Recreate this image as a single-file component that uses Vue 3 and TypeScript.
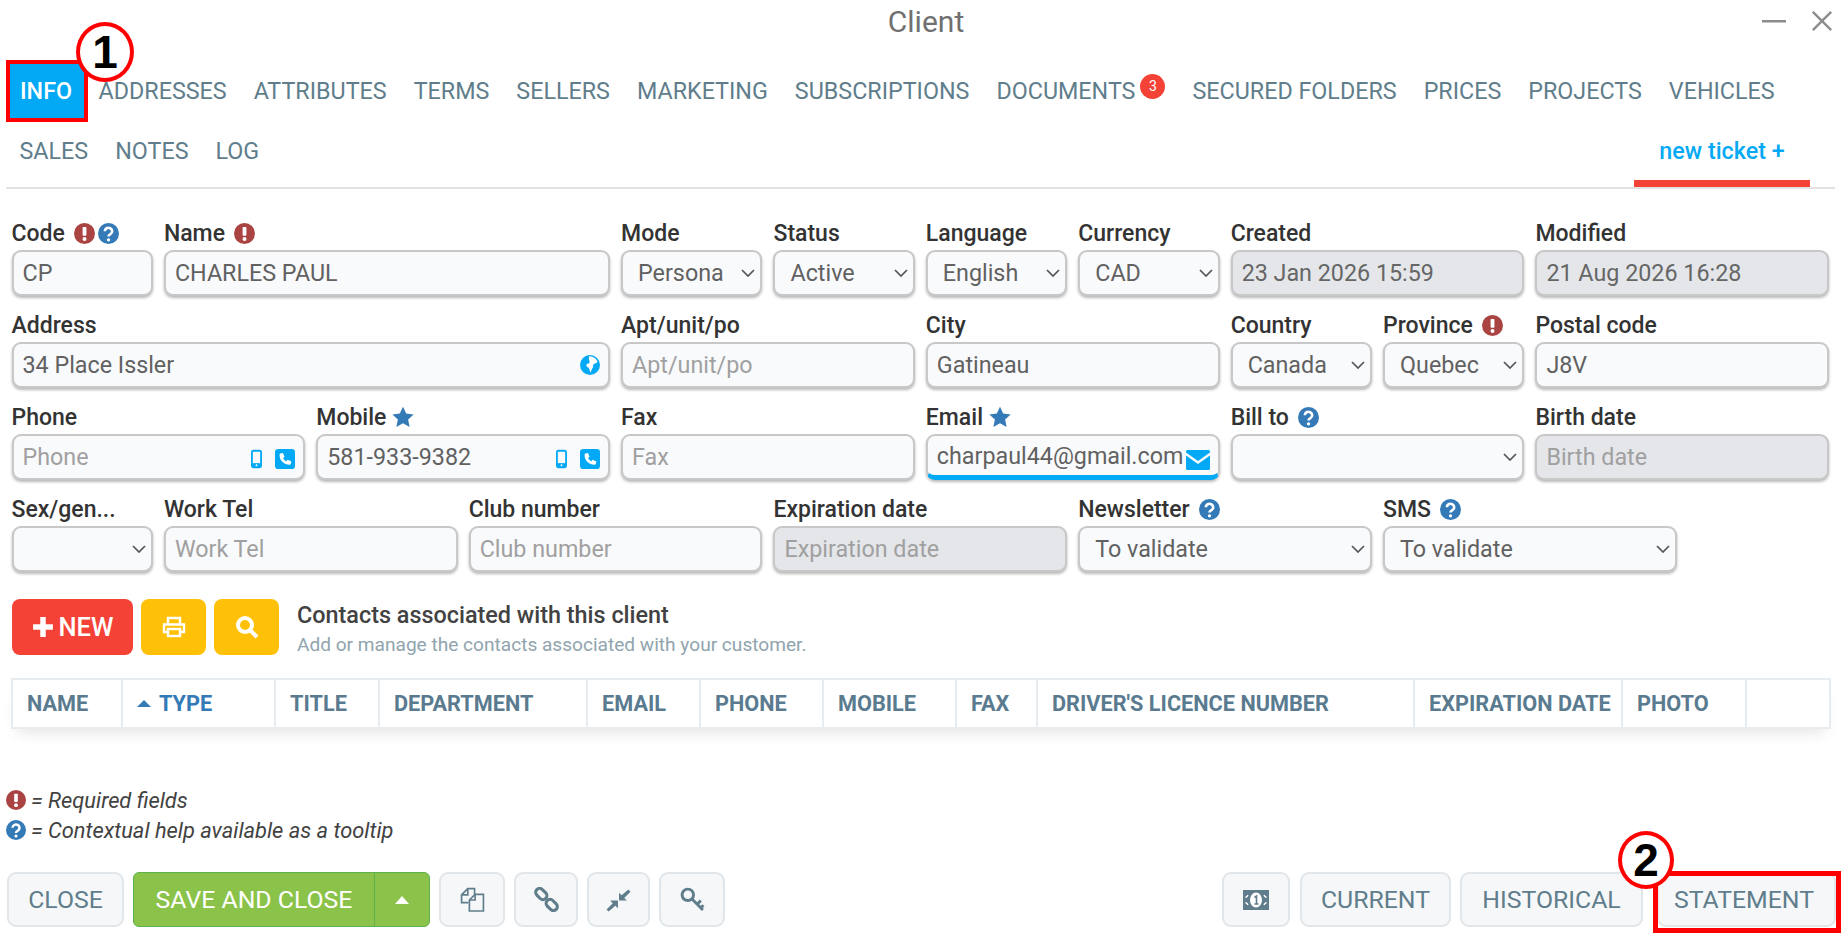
<script setup lang="ts">
interface Field {
  label: string
  span: number
  kind: 'input' | 'select'
  value?: string
  placeholder?: string
  disabled?: boolean
  focus?: boolean
  marks?: string[]
  icons?: string[]
}

const topTabs = ['ADDRESSES', 'ATTRIBUTES', 'TERMS', 'SELLERS', 'MARKETING', 'SUBSCRIPTIONS']
const midTabs = ['SECURED FOLDERS', 'PRICES', 'PROJECTS', 'VEHICLES']
const lowTabs = ['SALES', 'NOTES', 'LOG']

const fields: Field[] = [
  { label: 'Code', span: 1, kind: 'input', value: 'CP', marks: ['req', 'help'] },
  { label: 'Name', span: 3, kind: 'input', value: 'CHARLES PAUL', marks: ['req'] },
  { label: 'Mode', span: 1, kind: 'select', value: 'Persona' },
  { label: 'Status', span: 1, kind: 'select', value: 'Active' },
  { label: 'Language', span: 1, kind: 'select', value: 'English' },
  { label: 'Currency', span: 1, kind: 'select', value: 'CAD' },
  { label: 'Created', span: 2, kind: 'input', value: '23 Jan 2026 15:59', disabled: true },
  { label: 'Modified', span: 2, kind: 'input', value: '21 Aug 2026 16:28', disabled: true },
  { label: 'Address', span: 4, kind: 'input', value: '34 Place Issler', icons: ['globe'] },
  { label: 'Apt/unit/po', span: 2, kind: 'input', placeholder: 'Apt/unit/po' },
  { label: 'City', span: 2, kind: 'input', value: 'Gatineau' },
  { label: 'Country', span: 1, kind: 'select', value: 'Canada' },
  { label: 'Province', span: 1, kind: 'select', value: 'Quebec', marks: ['req'] },
  { label: 'Postal code', span: 2, kind: 'input', value: 'J8V' },
  { label: 'Phone', span: 2, kind: 'input', placeholder: 'Phone', icons: ['mobile', 'call'] },
  { label: 'Mobile', span: 2, kind: 'input', value: '581-933-9382', marks: ['star'], icons: ['mobile', 'call'] },
  { label: 'Fax', span: 2, kind: 'input', placeholder: 'Fax' },
  { label: 'Email', span: 2, kind: 'input', value: 'charpaul44@gmail.com', marks: ['star'], icons: ['mail'], focus: true },
  { label: 'Bill to', span: 2, kind: 'select', value: '', marks: ['help'] },
  { label: 'Birth date', span: 2, kind: 'input', placeholder: 'Birth date', disabled: true },
  { label: 'Sex/gen...', span: 1, kind: 'select', value: '' },
  { label: 'Work Tel', span: 2, kind: 'input', placeholder: 'Work Tel' },
  { label: 'Club number', span: 2, kind: 'input', placeholder: 'Club number' },
  { label: 'Expiration date', span: 2, kind: 'input', placeholder: 'Expiration date', disabled: true },
  { label: 'Newsletter', span: 2, kind: 'select', value: 'To validate', marks: ['help'] },
  { label: 'SMS', span: 2, kind: 'select', value: 'To validate', marks: ['help'] },
]

const columns = [
  { name: 'NAME', w: 110 },
  { name: 'TYPE', w: 153, sorted: true },
  { name: 'TITLE', w: 104 },
  { name: 'DEPARTMENT', w: 208 },
  { name: 'EMAIL', w: 113 },
  { name: 'PHONE', w: 123 },
  { name: 'MOBILE', w: 133 },
  { name: 'FAX', w: 81 },
  { name: "DRIVER'S LICENCE NUMBER", w: 377 },
  { name: 'EXPIRATION DATE', w: 208 },
  { name: 'PHOTO', w: 124 },
  { name: '', w: 84 },
]

const toolIcons = ['copy', 'chain', 'compress', 'key']
</script>

<template>
  <div class="page">
    <svg class="sprite" aria-hidden="true">
      <symbol id="req" viewBox="0 0 24 24">
        <circle cx="12" cy="12" r="12" fill="#a94442" />
        <rect x="9.8" y="4.5" width="4.4" height="10" rx="1" fill="#fff" />
        <circle cx="12" cy="18.2" r="2.3" fill="#fff" />
      </symbol>
      <symbol id="help" viewBox="0 0 24 24">
        <circle cx="12" cy="12" r="12" fill="#337ab7" />
        <path d="M7.8 9.4a4.2 3.9 0 1 1 6.4 3.3c-1.4.9-2.2 1.3-2.2 2.8" fill="none" stroke="#fff" stroke-width="3" />
        <circle cx="12" cy="19.2" r="1.9" fill="#fff" />
      </symbol>
      <symbol id="star" viewBox="0 0 24 24">
        <polygon points="12,0.8 15.5,8.2 23.6,9.2 17.6,14.8 19.2,22.9 12,18.9 4.8,22.9 6.4,14.8 0.4,9.2 8.5,8.2" fill="#337ab7" />
      </symbol>
      <symbol id="globe" viewBox="0 0 24 24">
        <circle cx="12" cy="12" r="12" fill="#03a9f4" />
        <path d="M11 1.500c4 0 9 2.500 10 7-1 1.500-3.500 1.500-5 3-1 1.500.5 3-1.500 5-1 1-.5 3-2 4.500-1-2.500-1-4.500-2.500-6-2-.5-3-2.500-2-4 1.500-1 3.500-.5 3.500-3 0-2-1.500-3-.5-6.500z" fill="#fff" />
      </symbol>
      <symbol id="mobile" viewBox="0 0 12 20">
        <rect x="1" y="1" width="10" height="18" rx="1.600" fill="none" stroke="#03a9f4" stroke-width="2" />
        <rect x="1" y="14.500" width="10" height="4.500" fill="#03a9f4" />
        <circle cx="6" cy="16.800" r="1" fill="#fff" />
      </symbol>
      <symbol id="call" viewBox="0 0 24 24">
        <rect width="24" height="24" rx="4" fill="#03a9f4" />
        <path d="M6.500 5.500l3-.8 2 4.500-1.800 1.500c.8 1.800 2.200 3.200 4 4l1.500-1.800 4.500 2-.8 3c-.2.600-.7 1-1.300 1C10.500 18.800 5.200 13.500 5.500 6.800c0-.6.400-1.100 1-1.300z" fill="#fff" />
      </symbol>
      <symbol id="mail" viewBox="0 0 24 20">
        <path d="M0 2.500V1.500C0 .7.700 0 1.500 0h21c.8 0 1.500.7 1.500 1.500v1L12 11z" fill="#03a9f4" />
        <path d="M0 5.500V18.500c0 .8.700 1.500 1.500 1.500h21c.8 0 1.500-.7 1.500-1.500V5.500L12 14z" fill="#03a9f4" />
      </symbol>
      <symbol id="chev" viewBox="0 0 14 8">
        <path d="M1 1l6 6 6-6" fill="none" stroke="#555" stroke-width="1.700" />
      </symbol>
      <symbol id="copy" viewBox="0 0 24 24" fill="none" stroke="#607d8b" stroke-width="1.600">
        <path d="M8 15H1.500V7.500L7.500 1.500H14V7" />
        <path d="M7.500 1.500v6h-6" />
        <path d="M9 23V12.500L14.500 7H22.500V23z" />
        <path d="M14.500 7v5.500H9" />
      </symbol>
      <symbol id="chain" viewBox="0 0 24 24" fill="none" stroke="#607d8b" stroke-width="3">
        <rect x="1" y="3" width="12" height="7.500" rx="3.700" transform="rotate(45 7 6.750)" />
        <rect x="11" y="13.500" width="12" height="7.500" rx="3.700" transform="rotate(45 17 17.250)" />
      </symbol>
      <symbol id="compress" viewBox="0 0 24 24" fill="#607d8b">
        <path d="M21.500 2.500l2 2-6 6 2.500 2.500h-7.500V5.500L15 8z" />
        <path d="M2.500 23.500l-2-2 6-6L4 13h7.500v7.500L9 18z" />
      </symbol>
      <symbol id="key" viewBox="0 0 24 24" fill="none" stroke="#607d8b" stroke-width="2.800">
        <circle cx="7.500" cy="7.500" r="5.500" />
        <path d="M11.500 11.500l10.500 10.500M16.500 16.500l3.500-3.500M20 20l2.500-2.500" />
      </symbol>
      <symbol id="money" viewBox="0 0 26 20">
        <rect width="26" height="20" fill="#607d8b" />
        <ellipse cx="13" cy="10" rx="6" ry="7.500" fill="#fff" />
        <path d="M11.500 7.500L13.500 6V14M11.500 14h4" fill="none" stroke="#607d8b" stroke-width="1.600" />
        <path d="M2.500 7.500a5 5 0 0 0 2.500-2.500M2.500 12.500a5 5 0 0 1 2.500 2.500M23.500 7.500a5 5 0 0 1-2.500-2.500M23.500 12.500a5 5 0 0 0-2.500 2.500" fill="none" stroke="#fff" stroke-width="1.400" />
      </symbol>
    </svg>

    <header class="titlebar">
      <h1 class="title">Client</h1>
      <div class="win-controls">
        <svg class="win-min" viewBox="0 0 24 4"><rect width="24" height="2.500" y="1" fill="#8c8c8c" /></svg>
        <svg class="win-close" viewBox="0 0 24 24"><path d="M2 2l20 20M22 2L2 22" stroke="#8c8c8c" stroke-width="2.600" fill="none" /></svg>
      </div>
    </header>

    <nav class="tabs">
      <div class="tab-row first">
        <a class="tab active">INFO</a>
        <a v-for="t in topTabs" :key="t" class="tab">{{ t }}</a>
        <a class="tab">DOCUMENTS<span class="badge">3</span></a>
        <a v-for="t in midTabs" :key="t" class="tab">{{ t }}</a>
      </div>
      <div class="tab-row second">
        <a v-for="t in lowTabs" :key="t" class="tab">{{ t }}</a>
        <a class="ticket">new ticket +</a>
      </div>
    </nav>

    <form class="form">
      <div v-for="f in fields" :key="f.label" class="field" :class="'span-' + f.span">
        <label class="label">
          {{ f.label }}
          <svg v-for="(m, i) in f.marks" :key="i" class="mark" :class="'mark-' + m"><use :href="'#' + m" /></svg>
        </label>
        <div v-if="f.kind === 'select'" class="control">
          <select class="select">
            <option>{{ f.value }}</option>
          </select>
          <svg class="chev"><use href="#chev" /></svg>
        </div>
        <div v-else class="control">
          <input
            class="input"
            :class="{ focus: f.focus }"
            :value="f.value"
            :placeholder="f.placeholder"
            :disabled="f.disabled"
            readonly
          />
          <div v-if="f.icons" class="adorn">
            <svg v-for="ic in f.icons" :key="ic" :class="'ic-' + ic"><use :href="'#' + ic" /></svg>
          </div>
        </div>
      </div>
    </form>

    <section class="contacts">
      <button class="btn-new" type="button">
        <svg viewBox="0 0 20 20" class="plus"><path d="M10 1v18M1 10h18" stroke="#fff" stroke-width="5" /></svg>
        NEW
      </button>
      <button class="btn-amber" type="button">
        <svg viewBox="0 0 24 24" class="amber-ic" fill="none" stroke="#fff" stroke-width="2.400">
          <path d="M6 9V3h12v6" />
          <path d="M6 17H2V9.500h20V17h-4" />
          <rect x="6" y="14" width="12" height="7" />
        </svg>
      </button>
      <button class="btn-amber" type="button">
        <svg viewBox="0 0 24 24" class="amber-ic" fill="none" stroke="#fff" stroke-width="4">
          <circle cx="10" cy="10" r="7" />
          <path d="M15 15l7 7" />
        </svg>
      </button>
      <div class="contacts-text">
        <div class="contacts-title">Contacts associated with this client</div>
        <div class="contacts-sub">Add or manage the contacts associated with your customer.</div>
      </div>
    </section>

    <table class="grid">
      <colgroup>
        <col v-for="c in columns" :key="c.name" :style="{ width: c.w + 'px' }" />
      </colgroup>
      <thead>
        <tr>
          <th v-for="c in columns" :key="c.name" :class="{ sorted: c.sorted }">
            <span v-if="c.sorted" class="caret"></span>{{ c.name }}
          </th>
        </tr>
      </thead>
    </table>

    <div class="legend">
      <div class="legend-line"><svg class="legend-ic"><use href="#req" /></svg>= Required fields</div>
      <div class="legend-line"><svg class="legend-ic"><use href="#help" /></svg>= Contextual help available as a tooltip</div>
    </div>

    <footer class="actions">
      <button class="btn close" type="button">CLOSE</button>
      <div class="save">
        <span class="save-main">SAVE AND CLOSE</span>
        <span class="save-more"><span class="save-caret"></span></span>
      </div>
      <button v-for="t in toolIcons" :key="t" class="btn tool" :class="'tool-' + t" type="button">
        <svg class="tool-ic"><use :href="'#' + t" /></svg>
      </button>
      <div class="spacer"></div>
      <button class="btn tool money" type="button">
        <svg class="money-ic"><use href="#money" /></svg>
      </button>
      <button class="btn current" type="button">CURRENT</button>
      <button class="btn historical" type="button">HISTORICAL</button>
      <button class="btn statement" type="button">STATEMENT<span class="statement-box"></span></button>
    </footer>

    <div class="callout one">1</div>
    <div class="callout two">2</div>
  </div>
</template>

<style scoped>
.page {
  position: relative;
  width: 1841px;
  height: 937px;
  display: flex;
  flex-direction: column;
  overflow: hidden;
  background: #fff;
  font-family: Roboto, "Liberation Sans", sans-serif;
  color: #616161;
}
.sprite { position: absolute; width: 0; height: 0; }

.titlebar { height: 44px; display: flex; align-items: center; justify-content: center; padding-left: 11px; flex: none; position: relative; }
.title { margin: 0; font-size: 30px; font-weight: 400; color: #707070; line-height: 44px; }
.win-controls { position: absolute; right: 8px; top: 10px; display: flex; gap: 25px; align-items: center; height: 22px; }
.win-min { width: 24px; height: 4px; }
.win-close { width: 22px; height: 22px; }

.tabs { margin: 20px 6px 0; border-bottom: 2px solid #e2e2e2; height: 125px; box-sizing: border-box; flex: none; }
.tab-row { display: flex; align-items: flex-start; }
.tab-row.first { height: 54px; }
.tab-row.second { height: 66px; margin-top: 3px; }
.tab { padding: 0 13.5px; font-size: 23.3px; color: #607d8b; line-height: 54px; white-space: nowrap; display: flex; align-items: center; }
.tab-row.second .tab { line-height: 60px; }
.tab.active { background: #03a9f4; color: #fff; font-weight: 500; padding: 0 12px 0 10px; margin: 0 1px 0 4px; outline: 4px solid #f00; }
.badge { width: 25px; height: 25px; border-radius: 50%; background: #f44336; color: #fff; font-size: 14px; line-height: 25px; text-align: center; margin: -10px 0 0 5px; }
.ticket { margin-left: auto; margin-right: 25px; width: 176px; height: 66px; box-sizing: border-box; border-bottom: 7px solid #f44336; color: #03a9f4; font-size: 23.3px; font-weight: 500; text-align: center; line-height: 60px; }

.form { display: grid; grid-template-columns: repeat(12, 141.4px); column-gap: 11px; row-gap: 15px; padding: 30px 0 0 11.5px; }
.field { min-width: 0; }
.span-1 { grid-column: span 1; }
.span-2 { grid-column: span 2; }
.span-3 { grid-column: span 3; }
.span-4 { grid-column: span 4; }
.label { display: flex; align-items: center; height: 28px; margin-bottom: 3px; font-size: 23px; font-weight: 500; color: #333; white-space: nowrap; }
.mark { width: 21px; height: 21px; margin-left: 9px; flex: none; }
.mark + .mark { margin-left: 3px; }
.mark-star { width: 22px; height: 22px; margin-left: 6px; }

.control { position: relative; height: 46px; }
.input, .select {
  width: 100%;
  height: 46px;
  box-sizing: border-box;
  border: 2px solid #c8c8c8;
  border-radius: 9px;
  background: #f9fafc;
  box-shadow: 0 2px 3px rgba(0, 0, 0, 0.28);
  font: 400 23.3px Roboto, "Liberation Sans", sans-serif;
  color: #616161;
  outline: none;
}
.input { padding: 0 9px; }
.input::placeholder { color: #a0a0a0; opacity: 1; }
.input:disabled { background: #e4e6ea; color: #666; }
.input.focus { border-bottom: 5px solid #03a9f4; }
.select { padding: 0 30px 0 15px; appearance: none; }
.chev { position: absolute; right: 7px; top: 19px; width: 14px; height: 8px; pointer-events: none; }
.adorn { position: absolute; right: 10px; top: 0; bottom: 0; display: flex; align-items: center; gap: 13px; padding-top: 3px; }
.ic-globe { width: 20px; height: 20px; margin-top: -3px; }
.ic-mobile { width: 11px; height: 20px; }
.ic-call { width: 20px; height: 20px; }
.ic-mail { width: 24px; height: 20px; margin-top: 2px; }

.contacts { display: flex; align-items: center; margin: 27px 0 0 12px; height: 56px; gap: 8px; flex: none; }
.btn-new { width: 121px; height: 56px; border: none; border-radius: 8px; background: #f44336; color: #fff; font: 500 25.5px Roboto, sans-serif; display: flex; align-items: center; justify-content: center; gap: 5px; padding: 0; }
.plus { width: 22px; height: 22px; }
.btn-amber { width: 65px; height: 56px; border: none; border-radius: 8px; background: #ffc107; display: flex; align-items: center; justify-content: center; padding: 0; }
.amber-ic { width: 24px; height: 24px; }
.contacts-text { margin-left: 10px; padding-top: 5px; }
.contacts-title { font-size: 23.4px; font-weight: 500; color: #424242; line-height: 30px; }
.contacts-sub { font-size: 19.1px; color: #90a4ae; line-height: 30px; }

.grid { margin: 23px 11px 0 11px; width: 1818px; table-layout: fixed; border-collapse: collapse; box-shadow: 0 10px 14px -6px rgba(0, 0, 0, 0.1); flex: none; }
.grid th { height: 49px; padding: 0 0 0 14px; border: 2px solid #e6ecef; text-align: left; font-size: 21.7px; font-weight: 700; color: #5a7b8f; white-space: nowrap; box-sizing: border-box; }
.grid th.sorted { color: #337ab7; }
.caret { display: inline-block; width: 0; height: 0; border: 7px solid transparent; border-top: 0; border-bottom: 7px solid #337ab7; margin-right: 8px; vertical-align: 4px; }

.legend { margin: 56px 0 0 6px; }
.legend-line { display: flex; align-items: center; height: 30px; font-size: 21.85px; font-style: italic; color: #424242; }
.legend-ic { width: 20px; height: 20px; margin-right: 5px; }

.actions { margin-top: auto; padding: 0 5px 10px 7px; display: flex; height: 55px; flex: none; box-sizing: content-box; }
.btn { position: relative; height: 55px; box-sizing: border-box; border: 2px solid #e0e6ea; border-radius: 9px; background: #f5f7f9; color: #607d8b; font: 400 24.8px Roboto, sans-serif; padding: 0; display: flex; align-items: center; justify-content: center; }
.close { width: 117px; margin-right: 9px; }
.save { width: 297px; height: 55px; display: flex; border-radius: 6px; background: #8bc34a; border: 1px solid #5fb14b; box-sizing: border-box; color: #fff; font-size: 24.8px; margin-right: 9px; }
.save-main { width: 240px; border-right: 1px solid #5fb14b; display: flex; align-items: center; justify-content: center; }
.save-more { flex: 1; display: flex; align-items: center; justify-content: center; }
.save-caret { width: 0; height: 0; border: 7px solid transparent; border-top: 0; border-bottom: 8px solid #fff; }
.tool { margin-right: 9px; }
.tool-copy { width: 66px; }
.tool-chain { width: 64px; }
.tool-compress { width: 63px; }
.tool-key { width: 66px; }
.tool-ic { width: 25px; height: 25px; }
.spacer { flex: 1; }
.money { width: 68px; margin-right: 10px; }
.money-ic { width: 26px; height: 20px; }
.current { width: 151px; margin-right: 9px; }
.historical { width: 183px; margin-right: 14px; }
.statement { width: 179px; padding-right: 5px; }
.statement-box { position: absolute; left: -6px; right: -7px; top: -3px; bottom: -8px; border: 5px solid #f00; pointer-events: none; }

.callout { position: absolute; box-sizing: border-box; border: 4px solid #f00; border-radius: 50%; background: #fff; color: #000; font: 700 46px "Liberation Sans", sans-serif; text-align: center; display: flex; align-items: center; justify-content: center; }
.callout.one { left: 76px; top: 22px; width: 58px; height: 60px; }
.callout.two { left: 1618px; top: 831px; width: 56px; height: 58px; }
</style>

<style>
html, body { margin: 0; background: #fff; }
</style>
